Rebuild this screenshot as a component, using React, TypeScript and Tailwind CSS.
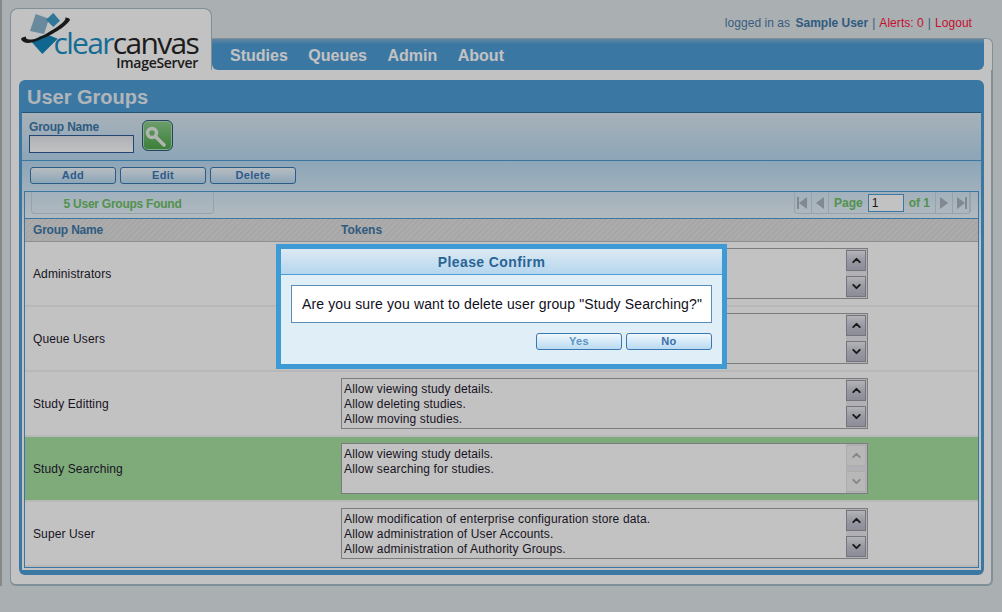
import { ChevronDown, ChevronUp } from 'lucide-react'

const ROWS = [
  { name: 'Administrators', tokens: [] as string[] },
  { name: 'Queue Users', tokens: [] as string[] },
  { name: 'Study Editting', tokens: ['Allow viewing study details.', 'Allow deleting studies.', 'Allow moving studies.'] },
  { name: 'Study Searching', tokens: ['Allow viewing study details.', 'Allow searching for studies.'], selected: true },
  { name: 'Super User', tokens: ['Allow modification of enterprise configuration store data.', 'Allow administration of User Accounts.', 'Allow administration of Authority Groups.'] },
]

function Logo() {
  return (
    <div className="relative h-[58px] w-[178px]">
      <svg width="56" height="46" viewBox="0 0 56 46" className="absolute left-0 top-0">
        <polygon points="15.7,2 29,6.7 24,22 10,19" fill="#8ab4cf" />
        <polygon points="33.3,1 40,8.7 33.3,15 26,7.7" fill="#3f9cc9" />
        <polygon points="11,29.3 22.3,42 37.7,26.7 28,22.7 20,24.3" fill="#1487bd" />
        <path d="M1,27 C3,32 10,32 18,28.5 C30,24 46,15 50,8 C50,6.5 48,5.5 45,5.5 C48,8 36,17 18,26 C10,28.5 5,28 6,24.5 C3,25 1,26 1,27 Z" fill="#222" />
      </svg>
      <div className="absolute right-0 top-[19px] font-['Open_Sans',sans-serif] text-[30px] leading-[24px] tracking-[-1.7px] whitespace-nowrap">
        <span className="text-[#1c8fc4]">clear</span>
        <span className="text-[#262626]">canvas</span>
      </div>
      <div className="absolute right-0 top-[45px] font-['Open_Sans',sans-serif] text-[14px] leading-[12px] font-semibold tracking-[-0.3px] text-[#262626]">ImageServer</div>
    </div>
  )
}

function PagerIcon({ dir, bar }: { dir: 'left' | 'right'; bar?: boolean }) {
  return (
    <div className="flex w-[17px] items-center justify-center border-r border-[#c4d6e2]">
      <svg width="12" height="14" viewBox="0 0 12 14" fill="#a8b4bc">
        {dir === 'left' ? <polygon points="10,1 10,13 2,7" /> : <polygon points="2,1 2,13 10,7" />}
        {bar && (dir === 'left' ? <rect x="0" y="1" width="2" height="12" /> : <rect x="10" y="1" width="2" height="12" />)}
      </svg>
    </div>
  )
}

function ScrollBtn({ up, disabled }: { up?: boolean; disabled?: boolean }) {
  const Icon = up ? ChevronUp : ChevronDown
  return (
    <div className={`flex h-[21px] w-[20px] items-center justify-center border ${disabled ? 'border-[#e3e3e3] bg-[#f2f2f2] text-[#b0b0b0]' : 'border-[#9a9aa6] bg-gradient-to-b from-[#ececf2] via-[#c9c9d6] to-[#b9b9c8] text-[#222]'}`}>
      <Icon size={13} strokeWidth={3.5} />
    </div>
  )
}

function TokenBox({ tokens, disabled }: { tokens: string[]; disabled?: boolean }) {
  return (
    <div className="flex h-[51px] w-[527px] border border-[#a3a3a3] bg-white">
      <div className="flex-1 px-[2px] pt-[3px] text-[12px] leading-[15px] tracking-[0.14px] text-[#1f1a2e]">
        {tokens.map(t => <div key={t}>{t}</div>)}
      </div>
      <div className={`flex w-[21px] flex-col justify-between bg-[#e9e9ee] ${disabled ? '' : 'pr-px'} py-px`}>
        <ScrollBtn up disabled={disabled} />
        <ScrollBtn disabled={disabled} />
      </div>
    </div>
  )
}

function Btn({ label, textClass }: { label: string; textClass: string }) {
  return (
    <button className={`h-[17px] w-[86px] rounded-[3px] border border-[#3b78b0] bg-gradient-to-b from-[#f1f8fc] to-[#b9daf2] text-[11px] leading-[15px] font-bold tracking-[0.3px] ${textClass}`}>
      {label}
    </button>
  )
}

export default function App() {
  return (
    <div className="relative h-[612px] w-[1002px] overflow-hidden bg-[#e0e7ea] font-['Liberation_Sans',Arial,sans-serif]">
      <div className="border-l-2 border-[#b0b4b6] pl-2 pr-[9px] pt-2">
        {/* Header */}
        <div className="flex">
          <div className="h-[62px] w-[202px] shrink-0 rounded-t-lg border border-b-0 border-[#a7bcc8] bg-white pl-[9px] pt-[3px]">
            <Logo />
          </div>
          <div className="flex-1">
            <div className="flex h-[30px] items-center justify-end gap-1 pr-[21px] text-[12px] tracking-[0.05px] text-[#4c7aa8]">
              <span>logged in as <b className="ml-[2px] font-bold tracking-normal text-[#3f78a8]">Sample User</b></span>
              <span>|</span>
              <span className="text-[#ff1540]">Alerts: 0</span>
              <span>|</span>
              <span className="text-[#ff1540]">Logout</span>
            </div>
            <div className="h-[32px] rounded-tr-md border-t border-r border-[#a7bcc8] bg-white pr-2">
              <div className="flex h-[31px] items-center gap-[20.5px] rounded-b-md bg-gradient-to-b from-[#7fb0d4] via-[#4e9dd7] via-[18%] to-[#4e9dd7] pl-[18px] pt-[2px] text-[16px] font-bold text-white">
                <span>Studies</span>
                <span>Queues</span>
                <span>Admin</span>
                <span>About</span>
              </div>
            </div>
          </div>
        </div>

        {/* Body */}
        <div className="h-[516px] rounded-b-md border border-t-0 border-r-2 border-b-2 border-[#a7bcc8] bg-white px-2 pt-[10px]">
          <div className="h-[495px] w-[965px] rounded-md bg-[#4e9dd7] px-[3px] pb-[5px]">
            <div className="flex h-[32px] items-center pl-[5px] pt-[1px] text-[20px] font-bold text-[#e6eef4]">User Groups</div>
            <div className="h-[458px] border-t border-[#2f6d9c] bg-white">
              <div className="flex h-[48px] border-b border-[#4e9dd7] bg-gradient-to-b from-[#dceaf3] to-[#b9daf2] pl-[7px]">
                <div className="pt-[7px]">
                  <div className="text-[12px] leading-[15px] font-bold tracking-[-0.2px] text-[#3f78a8]">Group Name</div>
                  <div className="h-[18px] w-[105px] border border-[#2f5d9c] bg-gradient-to-b from-[#e4e8ec] to-white" />
                </div>
                <div className="ml-2 pt-[7px]">
                  <div className="h-[31px] w-[31px] rounded-[6px] border border-[#2f5d7c] bg-gradient-to-b from-[#8fd08f] to-[#4aa84a] shadow-[inset_0_0_0_1px_#b4e0b4]">
                    <svg width="29" height="29" viewBox="0 0 29 29" fill="none">
                      <circle cx="9" cy="12" r="4.5" stroke="#e8eee8" strokeWidth="3.5" />
                      <path d="M13 16 L21 24" stroke="#e8eee8" strokeWidth="3.5" strokeLinecap="round" />
                    </svg>
                  </div>
                </div>
              </div>
              <div className="bg-gradient-to-b from-[#b9daf2] to-white px-[2px]">
                <div className="flex h-[30px] items-start gap-1 pl-[6px] pt-[6px]">
                  <Btn label="Add" textClass="text-[#3f78b8]" />
                  <Btn label="Edit" textClass="text-[#3f78b8]" />
                  <Btn label="Delete" textClass="text-[#3f78b8]" />
                </div>
                <div className="border border-b-0 border-[#4e9dd7]">
                  <div className="flex h-[27px] items-start justify-between border-b border-[#4e9dd7] pl-[6px] pr-[7px]">
                    <div className="flex h-[22px] w-[183px] items-center justify-center rounded-b-sm border border-t-0 border-[#c4d6e2] pt-[2px] text-[12px] font-bold tracking-[-0.25px] text-[#6cc066]">
                      5 User Groups Found
                    </div>
                    <div className="flex h-[22px] rounded-b-sm border border-t-0 border-[#c4d6e2] text-[12px] font-bold text-[#6cc066]">
                      <PagerIcon dir="left" bar />
                      <PagerIcon dir="left" />
                      <div className="flex w-[107px] items-center justify-between border-r border-[#c4d6e2] pl-[5px] pr-[5px]">
                        <span>Page</span>
                        <div className="h-[18px] w-[36px] border border-[#4e9dd7] bg-white pl-[3px] text-[12px] leading-[16px] font-normal text-[#1f1a2e]">1</div>
                        <span>of 1</span>
                      </div>
                      <PagerIcon dir="right" />
                      <PagerIcon dir="right" bar />
                    </div>
                  </div>
                  <div className="flex h-[23px] items-center border-b border-[#bcbcbc] bg-[repeating-linear-gradient(135deg,#e2e2e2_0,#e2e2e2_2px,#dcdcdc_2px,#dcdcdc_4px)] pl-2 text-[12px] font-bold text-[#3f78a8]">
                    <div className="w-[308px] tracking-[-0.2px]">Group Name</div>
                    <div>Tokens</div>
                  </div>
                </div>
              </div>
              <div className="mx-[2px] border-x border-b border-[#4e9dd7]">
                {ROWS.map(r => (
                  <div key={r.name} className={`flex h-[65px] items-start border-b-2 border-[#f2f2f2] pl-2 pt-[6px] ${r.selected ? 'bg-[#a7e1a2]' : 'bg-white'}`}>
                    <div className="flex h-[51px] w-[308px] items-center text-[12px] tracking-[0.12px] text-[#1f1a2e]">{r.name}</div>
                    <TokenBox tokens={r.tokens} disabled={r.selected} />
                  </div>
                ))}
              </div>
            </div>
          </div>
        </div>
      </div>

      {/* Dim overlay + dialog */}
      <div className="absolute inset-0 bg-black/[0.24]" />
      <div className="absolute left-[276px] top-[244px] h-[125px] w-[451px] border-[5px] border-[#3d9ad5] bg-[#e0eef8]">
        <div className="flex h-[26px] items-center justify-center border-b border-[#4e9dd7] bg-gradient-to-b from-[#dceaf3] to-[#b5d6ee] pr-[20px] pt-[1px] text-[14px] font-bold tracking-[0.4px] text-[#2a6496]">
          Please Confirm
        </div>
        <div className="px-[10px] pt-[10px]">
          <div className="flex h-[38px] items-center border border-[#5a8db5] bg-white pl-[10px] text-[14px] tracking-[0.13px] whitespace-nowrap text-[#10101c]">
            Are you sure you want to delete user group "Study Searching?"
          </div>
          <div className="flex justify-end gap-1 pt-[10px]">
            <Btn label="Yes" textClass="text-[#5b94c4]" />
            <Btn label="No" textClass="text-[#3a70a8]" />
          </div>
        </div>
      </div>
    </div>
  )
}
